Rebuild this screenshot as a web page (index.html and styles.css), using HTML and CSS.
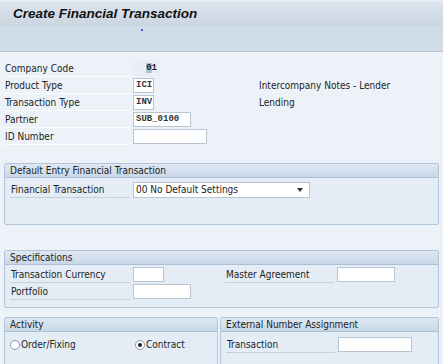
FILE: index.html
```html
<!DOCTYPE html>
<html>
  <head>
    <meta charset="UTF-8" />
    <title>Create Financial Transaction</title>
    <link rel="stylesheet" href="styles.css">
  </head>
  <body>
    <div class="title-bar">Create Financial Transaction</div>
    <div class="toolbar">
      <span class="toolbar-dot"></span>
    </div>

    <div class="content">
      <div class="header-form">
        <div class="row">
          <div class="label">Company Code</div>
          <div class="field readonly"><span class="sel">0</span>1</div>
        </div>
        <div class="row">
          <div class="label">Product Type</div>
          <div class="field mono w-xs">ICI</div>
          <div class="desc">Intercompany Notes - Lender</div>
        </div>
        <div class="row">
          <div class="label">Transaction Type</div>
          <div class="field mono w-xs">INV</div>
          <div class="desc">Lending</div>
        </div>
        <div class="row">
          <div class="label">Partner</div>
          <div class="field mono w-m">SUB_0100</div>
        </div>
        <div class="row">
          <div class="label">ID Number</div>
          <div class="field w-l"></div>
        </div>
      </div>

      <div class="group group-default">
        <div class="group-title">Default Entry Financial Transaction</div>
        <div class="group-body">
          <div class="row">
            <div class="label">Financial Transaction</div>
            <div class="select">
              <span>00 No Default Settings</span>
              <span class="caret"></span>
            </div>
          </div>
        </div>
      </div>

      <div class="group group-specs">
        <div class="group-title">Specifications</div>
        <div class="group-body">
          <div class="row">
            <div class="label">Transaction Currency</div>
            <div class="field w-s"></div>
            <div class="label label-right">Master Agreement</div>
            <div class="field w-m"></div>
          </div>
          <div class="row">
            <div class="label">Portfolio</div>
            <div class="field w-m"></div>
          </div>
        </div>
      </div>

      <div class="group-pair">
        <div class="group group-activity">
          <div class="group-title">Activity</div>
          <div class="group-body radios">
            <label class="radio"><span class="radio-dot"></span>Order/Fixing</label>
            <label class="radio"><span class="radio-dot checked"></span>Contract</label>
          </div>
        </div>
        <div class="group group-ext">
          <div class="group-title">External Number Assignment</div>
          <div class="group-body">
            <div class="row">
              <div class="label label-ext">Transaction</div>
              <div class="field w-ext"></div>
            </div>
          </div>
        </div>
      </div>
    </div>
  </body>
</html>
```

FILE: styles.css
```css
body {
  font-family: "DejaVu Sans Condensed", "DejaVu Sans", Tahoma, sans-serif;
  font-size: 10px;
  margin: 0;
  padding: 0;
  background-color: #edf2f8;
  color: #222;
  overflow: hidden;
}
.title-bar {
  height: 26px;
  line-height: 26px;
  padding-left: 13px;
  background: linear-gradient(#dfe6ee, #c9d5e1);
  border-top: 1px solid #e9eef3;
  box-sizing: border-box;
  font-family: "Liberation Sans", Arial, sans-serif;
  font-size: 13.5px;
  font-weight: bold;
  font-style: italic;
  color: #111;
}
.toolbar {
  height: 26px;
  background-color: #d0dde7;
  border-bottom: 1px solid #b8c4cf;
  box-sizing: border-box;
}
.toolbar-dot {
  display: block;
  width: 2px;
  height: 2px;
  margin-left: 141px;
  position: relative;
  top: 3px;
  background-color: #4a5ae0;
}
.content {
  padding: 8px 4px 0 4px;
}
.row {
  display: flex;
  align-items: center;
  height: 17px;
}
.label {
  width: 126px;
  margin-right: 3px;
  height: 16px;
  line-height: 16px;
  padding-left: 1px;
  box-sizing: border-box;
  border-bottom: 1px solid #fafcfe;
  white-space: nowrap;
}
.field {
  height: 15px;
  line-height: 13px;
  box-sizing: border-box;
  background-color: #fff;
  border: 1px solid #b9c6d2;
  padding: 0 2px;
}
.field.mono {
  font-family: "Liberation Mono", "Courier New", monospace;
  font-size: 9px;
  font-weight: bold;
  color: #333;
}
.field.readonly {
  width: 27px;
  background-color: #e9eff5;
  border-color: #e9eff5;
  text-align: right;
  font-family: "Liberation Mono", monospace;
  font-size: 9px;
  font-weight: bold;
}
.sel {
  background-color: #a8c2de;
}
.w-xs {
  width: 21px;
}
.w-s {
  width: 31px;
}
.w-m {
  width: 58px;
}
.w-l {
  width: 74px;
}
.w-ext {
  width: 74px;
}
.desc {
  margin-left: 105px;
  white-space: nowrap;
}
.header-form {
  margin-bottom: 18px;
}
.group {
  background-color: #e4edf6;
  border: 1px solid #b2c5d8;
  border-radius: 2px;
  box-sizing: border-box;
}
.group-title {
  height: 13px;
  line-height: 13px;
  padding-left: 5px;
  background: linear-gradient(#dfe8f2, #c8d8e8);
  border-bottom: 1px solid #aac0d6;
  white-space: nowrap;
}
.group-body {
  padding: 3px 5px 0 5px;
}
.group-body .label {
  width: 120px;
  border-bottom-color: #c5d0db;
}
.group-default {
  height: 62px;
  margin-bottom: 25px;
}
.select {
  width: 177px;
  height: 16px;
  box-sizing: border-box;
  background-color: #fff;
  border: 1px solid #b9c6d2;
  display: flex;
  align-items: center;
  justify-content: space-between;
  padding: 0 6px 0 2px;
}
.caret {
  width: 0;
  height: 0;
  border-left: 3px solid transparent;
  border-right: 3px solid transparent;
  border-top: 4px solid #333;
}
.group-specs {
  height: 58px;
  margin-bottom: 9px;
}
.group-specs .group-body {
  padding-top: 1px;
}
.group-body .label-right {
  margin-left: 61px;
  width: 109px;
}
.group-pair {
  display: flex;
  gap: 2px;
}
.group-activity {
  width: 214px;
  height: 60px;
}
.group-ext {
  flex: 1;
  height: 60px;
}
.radios {
  display: flex;
  padding-top: 7px;
}
.radio {
  display: flex;
  align-items: center;
  gap: 1px;
  width: 125px;
  flex-shrink: 0;
}
.radio-dot {
  width: 10px;
  height: 10px;
  border-radius: 50%;
  box-sizing: border-box;
  border: 1px solid #8e9aa6;
  background: #fff;
  position: relative;
}
.radio-dot.checked::after {
  content: "";
  position: absolute;
  left: 2px;
  top: 2px;
  width: 4px;
  height: 4px;
  border-radius: 50%;
  background: #222;
}
.group-ext .group-body {
  padding-top: 4px;
}
.group-body .label-ext {
  width: 109px;
}
```
